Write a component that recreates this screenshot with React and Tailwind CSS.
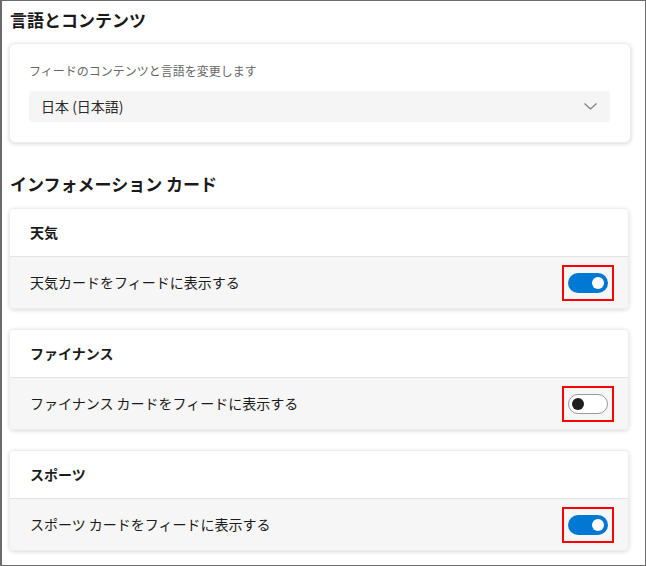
const jp = { fontFamily: '"Noto Sans CJK JP", "Noto Sans", sans-serif' };

function Toggle({ on }) {
  return (
    <div className="border-2 border-[#ff0000] px-[4px] py-[6px]">
      {on ? (
        <div className="w-[40px] h-[20px] rounded-full bg-[#0078d4] flex items-center justify-end pr-[4px]">
          <div className="w-[12px] h-[12px] rounded-full bg-white" />
        </div>
      ) : (
        <div className="w-[40px] h-[20px] rounded-full bg-white border border-[#9a9a9a] flex items-center pl-[3px]">
          <div className="w-[12px] h-[12px] rounded-full bg-[#1f1f1f]" />
        </div>
      )}
    </div>
  );
}

function InfoCard({ title, label, on }) {
  return (
    <div className="w-[620px] rounded-[5px] border border-[#ededed] shadow-[0_1px_4px_rgba(0,0,0,0.16)] overflow-hidden">
      <div className="h-[47px] bg-white flex items-center px-[20px] text-[14px] font-bold text-[#1b1b1b]">
        {title}
      </div>
      <div className="h-px bg-[#e3e3e3]" />
      <div className="h-[51px] bg-[#f6f6f6] flex items-center justify-between pl-[20px] pr-[14px] text-[14px] text-[#1b1b1b]">
        <span>{label}</span>
        <Toggle on={on} />
      </div>
    </div>
  );
}

export default function App() {
  return (
    <div style={jp}
         className="w-[646px] h-[566px] bg-white border border-[#6b6b6b] border-l-2 pt-[7px] pl-[7px] overflow-hidden">

      <h2 className="ml-px h-[24px] leading-[24px] text-[17px] font-bold text-[#1a1a1a]">
        言語とコンテンツ
      </h2>

      <div className="mt-[11px] w-[622px] rounded-[6px] border border-[#ededed] shadow-[0_1px_4px_rgba(0,0,0,0.16)] bg-white pt-[18px] pb-[20px] pl-[19px] pr-[20px]">
        <p className="h-[18px] leading-[18px] text-[12px] text-[#666]">
          フィードのコンテンツと言語を変更します
        </p>
        <div className="mt-[11px] h-[31px] rounded-[3px] bg-[#f5f5f5] flex items-center justify-between pl-[12px] pr-[13px] text-[14px] text-[#2a2a2a]">
          <span>日本 (日本語)</span>
          <svg width="13" height="7" viewBox="0 0 13 7" fill="none">
            <path d="M0.5 0.5 L6.5 6 L12.5 0.5" stroke="#7a7a7a" strokeWidth="1.1" />
          </svg>
        </div>
      </div>

      <h2 className="mt-[29px] ml-px h-[24px] leading-[24px] text-[17px] font-bold text-[#1a1a1a]">
        インフォメーション カード
      </h2>

      <div className="mt-[12px] flex flex-col gap-[20px]">
        <InfoCard title="天気" label="天気カードをフィードに表示する" on />
        <InfoCard title="ファイナンス" label="ファイナンス カードをフィードに表示する" on={false} />
        <InfoCard title="スポーツ" label="スポーツ カードをフィードに表示する" on />
      </div>
    </div>
  );
}
